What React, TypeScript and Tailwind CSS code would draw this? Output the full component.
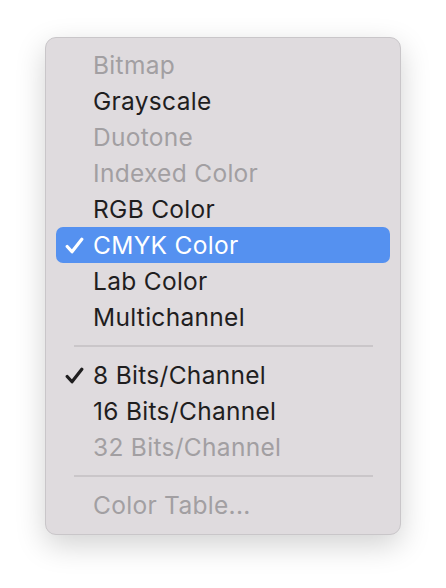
import React from "react";

type Item =
  | { kind: "item"; label: string; disabled?: boolean; checked?: boolean; selected?: boolean }
  | { kind: "sep" };

const items: Item[] = [
  { kind: "item", label: "Bitmap", disabled: true },
  { kind: "item", label: "Grayscale" },
  { kind: "item", label: "Duotone", disabled: true },
  { kind: "item", label: "Indexed Color", disabled: true },
  { kind: "item", label: "RGB Color" },
  { kind: "item", label: "CMYK Color", checked: true, selected: true },
  { kind: "item", label: "Lab Color" },
  { kind: "item", label: "Multichannel" },
  { kind: "sep" },
  { kind: "item", label: "8 Bits/Channel", checked: true },
  { kind: "item", label: "16 Bits/Channel" },
  { kind: "item", label: "32 Bits/Channel", disabled: true },
  { kind: "sep" },
  { kind: "item", label: "Color Table...", disabled: true },
];

function Check({ color }: { color: string }) {
  return (
    <svg width="19" height="17" viewBox="0 0 19 17" fill="none">
      <path
        d="M2.2 9.5 L7 14.8 L16.8 2.2"
        stroke={color}
        strokeWidth="3.2"
        strokeLinecap="round"
        strokeLinejoin="round"
      />
    </svg>
  );
}

export default function App() {
  return (
    <div className="w-[446px] h-[588px] bg-white pt-[37px] pl-[45px]" style={{ fontFamily: "Inter, 'Liberation Sans', sans-serif" }}>
      <div className="w-[356px] rounded-[11px] bg-[#dfdbde] border border-[#c9c6c9] shadow-[0_10px_30px_rgba(0,0,0,0.18)] pt-[9px] pb-[11px] px-[10px]">
        {items.map((it, i) =>
          it.kind === "sep" ? (
            <div key={i} className="h-[22px] flex items-center pl-[18px] pr-[17px]">
              <div className="h-[2px] w-full bg-[#cac6c9]" />
            </div>
          ) : (
            <div
              key={i}
              className={
                "h-[36px] flex items-center rounded-[7px] " +
                (it.selected ? "bg-[#5591f0] text-white" : it.disabled ? "text-[#a29fa2]" : "text-[#1f1e1f]")
              }
            >
              <div className="w-[37px] h-full flex items-center justify-end pr-[9px] pt-[1px]">
                {it.checked ? <Check color={it.selected ? "#ffffff" : "#1f1e1f"} /> : null}
              </div>
              <span className="text-[24.5px] leading-none tracking-[0.3px]">{it.label}</span>
            </div>
          )
        )}
      </div>
    </div>
  );
}
